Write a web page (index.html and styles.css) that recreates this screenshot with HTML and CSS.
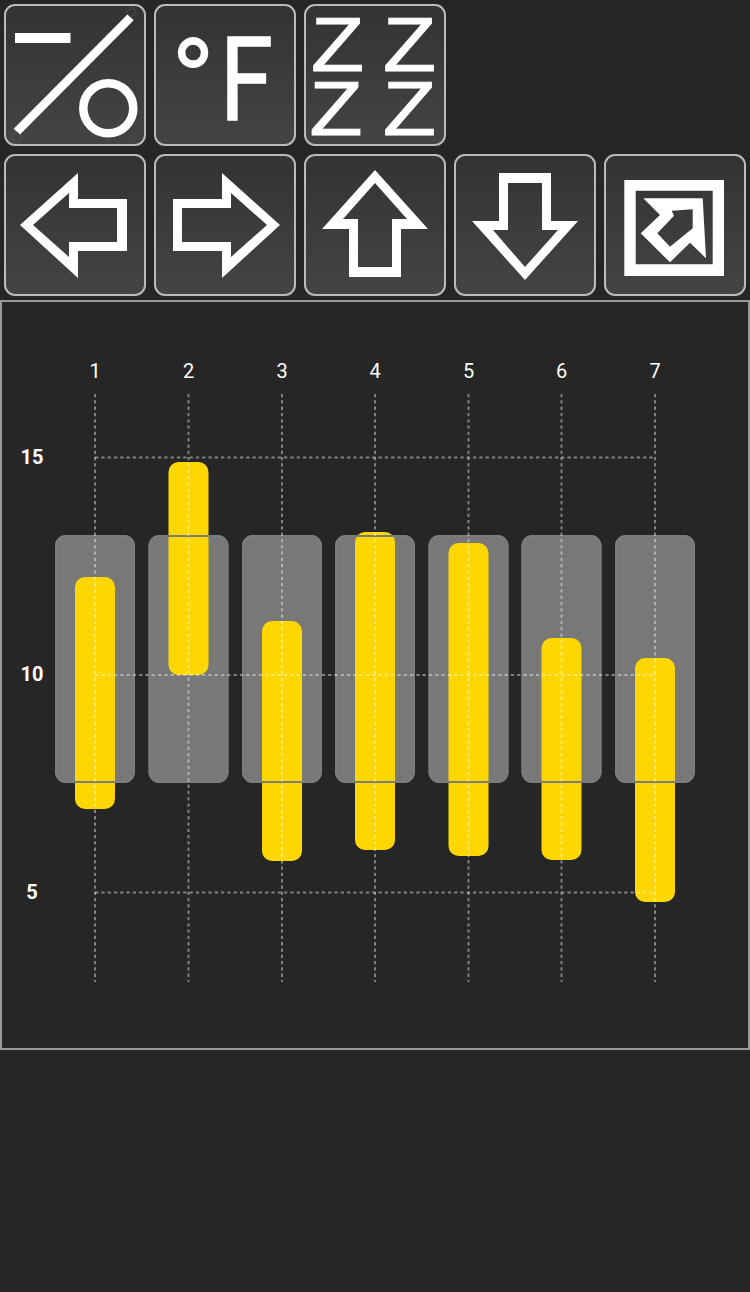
FILE: index.html
```html
<!DOCTYPE html>
<html lang="en">
<head>
    <meta charset="UTF-8">
    <title>Thermostat schedule</title>
    <link rel="stylesheet" href="styles.css">
</head>
<body>
    <div class="toolbar">
        <div class="row">
            <button class="tool">
                <svg viewBox="0 0 142 142">
                    <rect class="ink" x="11" y="29" width="55.5" height="10"/>
                    <line class="ink-line" x1="12.7" y1="127.7" x2="126.7" y2="13.3"/>
                    <path class="ghost" d="M12.7 127.7l-5.5 5.5 5 5 5.5-5.5zM126.7 13.300l5.500-5.500-4.800-4.800-5.500 5.500z"/>
                    <circle class="ink-line" cx="104.300" cy="104.300" r="25"/>
                </svg>
            </button>
            <button class="tool">
                <svg viewBox="0 0 142 142">
                    <text class="glyph deg" x="16" y="121.600">°</text>
                    <text class="glyph fahr" x="66" y="116" textLength="53" lengthAdjust="spacingAndGlyphs">F</text>
                </svg>
            </button>
            <button class="tool">
                <svg viewBox="0 0 142 142">
                    <text class="glyph zed" x="33.500" y="67" textLength="53" lengthAdjust="spacingAndGlyphs">Z</text>
                    <text class="glyph zed" x="105.500" y="67" textLength="53" lengthAdjust="spacingAndGlyphs">Z</text>
                    <text class="glyph zed" x="32" y="131" textLength="53" lengthAdjust="spacingAndGlyphs">Z</text>
                    <text class="glyph zed" x="105.500" y="131" textLength="53" lengthAdjust="spacingAndGlyphs">Z</text>
                </svg>
            </button>
        </div>
        <div class="row">
            <button class="tool">
                <svg viewBox="0 0 142 142">
                    <path class="ink" d="M16 71L74 19V45H123V97H74V124ZM29 71L65 103V88H113V54H65V39Z"/>
                </svg>
            </button>
            <button class="tool">
                <svg viewBox="0 0 142 142">
                    <path class="ink" d="M126 71L68 19V45H19V97H68V124ZM113 71L77 103V88H28V54H77V39Z"/>
                </svg>
            </button>
            <button class="tool">
                <svg viewBox="0 0 142 142">
                    <path class="ink" d="M71 16L124 75H97V123H45V75H18ZM71 29L39 65H54V113H88V65H103Z"/>
                </svg>
            </button>
            <button class="tool">
                <svg viewBox="0 0 142 142">
                    <path class="ink" d="M71 126L124 67H97V19H45V67H18ZM71 113L39 76H54V29H88V76H104Z"/>
                </svg>
            </button>
            <button class="tool">
                <svg viewBox="0 0 142 142">
                    <path class="ink" d="M20.300 26H120V122H20.300ZM31.700 36.700V110.300H108.700V36.700Z"/>
                    <path class="ink" d="M39.300 44.300H98.700L102 104.300 86 88.700 66 108.300 36.700 79.300 56 61ZM67.700 56.700L70 61.700 53.300 79.300 66 92.700 88.700 74.300V55.300Z"/>
                </svg>
            </button>
        </div>
    </div>

    <div class="chart">
        <svg class="plot" viewBox="0 0 746 746">
            <!-- svg origin is the inside of the frame: page x-2, y-302 -->
            <g class="band">
                <rect x="53" y="233" width="80" height="248" rx="11"/>
                <rect x="146.500" y="233" width="80" height="248" rx="11"/>
                <rect x="240" y="233" width="80" height="248" rx="11"/>
                <rect x="333" y="233" width="80" height="248" rx="11"/>
                <rect x="426.500" y="233" width="80" height="248" rx="11"/>
                <rect x="519.500" y="233" width="80" height="248" rx="11"/>
                <rect x="613" y="233" width="80" height="248" rx="11"/>
            </g>
            <g class="bar">
                <rect x="73" y="275" width="40" height="232" rx="10"/>
                <rect x="166.500" y="160" width="40" height="213" rx="10"/>
                <rect x="260" y="319" width="40" height="240" rx="10"/>
                <rect x="353" y="230" width="40" height="318" rx="10"/>
                <rect x="446.500" y="241" width="40" height="313" rx="10"/>
                <rect x="539.500" y="336" width="40" height="222" rx="10"/>
                <rect x="633" y="356" width="40" height="244" rx="10"/>
            </g>
            <g class="band-edge">
                <rect x="54" y="234" width="78" height="246" rx="10"/>
                <rect x="147.500" y="234" width="78" height="246" rx="10"/>
                <rect x="241" y="234" width="78" height="246" rx="10"/>
                <rect x="334" y="234" width="78" height="246" rx="10"/>
                <rect x="427.500" y="234" width="78" height="246" rx="10"/>
                <rect x="520.500" y="234" width="78" height="246" rx="10"/>
                <rect x="614" y="234" width="78" height="246" rx="10"/>
            </g>
            <g class="grid">
                <line x1="93" y1="92" x2="93" y2="680"/>
                <line x1="186.500" y1="92" x2="186.500" y2="680"/>
                <line x1="280" y1="92" x2="280" y2="680"/>
                <line x1="373" y1="92" x2="373" y2="680"/>
                <line x1="466.500" y1="92" x2="466.500" y2="680"/>
                <line x1="559.500" y1="92" x2="559.500" y2="680"/>
                <line x1="653" y1="92" x2="653" y2="680"/>
                <line x1="93" y1="155.500" x2="653" y2="155.500"/>
                <line x1="93" y1="373" x2="653" y2="373"/>
                <line x1="93" y1="590.500" x2="653" y2="590.500"/>
            </g>
            <g class="day">
                <text x="93" y="76">1</text>
                <text x="186.500" y="76">2</text>
                <text x="280" y="76">3</text>
                <text x="373" y="76">4</text>
                <text x="466.500" y="76">5</text>
                <text x="559.500" y="76">6</text>
                <text x="653" y="76">7</text>
            </g>
            <g class="temp">
                <text x="30" y="162">15</text>
                <text x="30" y="379">10</text>
                <text x="30" y="597">5</text>
            </g>
        </svg>
    </div>
</body>
</html>
```

FILE: styles.css
```css
body {
    margin: 0;
    background-color: #262626;
}

.toolbar {
    padding: 4px 4px 4px;
}

.row {
    display: flex;
    gap: 8px;
    margin-bottom: 8px;
}

.row:last-child {
    margin-bottom: 0;
}

.tool {
    width: 142px;
    height: 142px;
    padding: 0;
    border: 2px solid #bbb;
    border-radius: 11px;
    background: linear-gradient(#333, #444);
    box-sizing: border-box;
}

.tool svg {
    display: block;
    width: 142px;
    height: 142px;
    margin: -2px;
    overflow: visible;
    filter: blur(0.7px);
}

.ink {
    fill: #fff;
    fill-rule: evenodd;
}

.ink-line {
    fill: none;
    stroke: #fff;
    stroke-width: 8.5px;
}

.ghost {
    fill: none;
    stroke: #555;
    stroke-width: 1px;
}

.glyph {
    fill: #fff;
}

.deg {
    font-family: Roboto, sans-serif;
    font-size: 123px;
}

.fahr {
    font-family: Roboto, sans-serif;
    font-size: 117px;
    stroke: #fff;
    stroke-width: 1.5px;
}

.zed {
    font-family: "Liberation Sans", sans-serif;
    font-size: 76px;
    text-anchor: middle;
    stroke: #fff;
    stroke-width: 1px;
}

.chart {
    width: 750px;
    height: 750px;
    border: 2px solid #999;
    box-sizing: border-box;
}

.plot {
    display: block;
    width: 746px;
    height: 746px;
}

.band {
    fill: #787878;
}

.band-edge {
    fill: none;
    stroke: #7c7c7c;
    stroke-width: 2px;
}

.bar {
    fill: #ffd700;
}

.grid {
    stroke: rgba(255, 255, 255, 0.42);
    stroke-width: 2px;
    stroke-dasharray: 3.3 3;
}

.day text {
    font-family: Roboto, sans-serif;
    font-size: 20px;
    fill: #fff;
    text-anchor: middle;
}

.temp text {
    font-family: Roboto, sans-serif;
    font-size: 20px;
    font-weight: 700;
    fill: #fff;
    text-anchor: middle;
}
```
